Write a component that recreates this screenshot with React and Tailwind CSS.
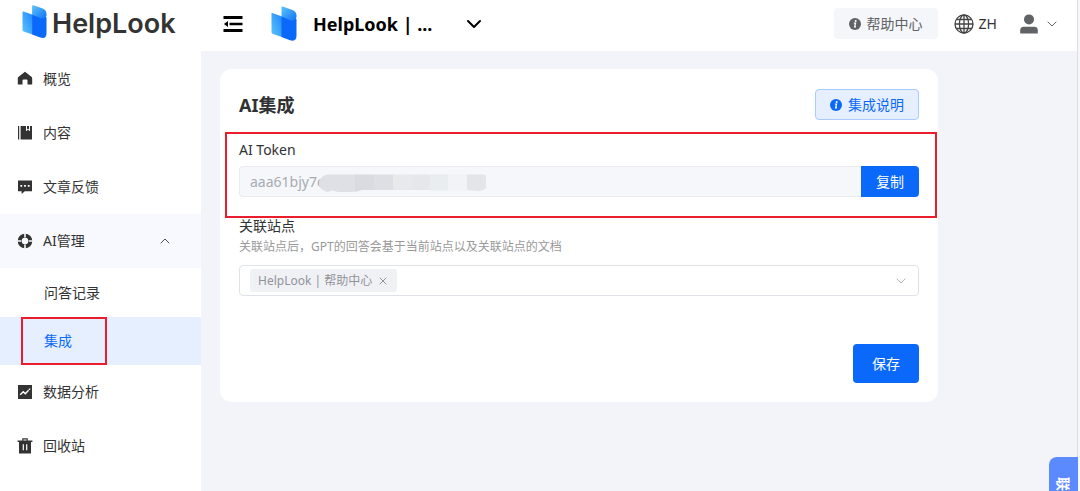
import { ChevronDown, ChevronUp, X } from 'lucide-react'

const HomeIcon = () => (
  <svg viewBox="0 0 16 16" className="h-4 w-4" fill="currentColor" aria-hidden="true">
    <path d="M8 .8 14.4 5.8Q15.2 6.4 15.2 7.4V13.6H10.5V9.6Q10.5 8.4 9.3 8.4H6.7Q5.5 8.4 5.5 9.6V13.6H.8V7.4Q.8 6.4 1.6 5.8Z" />
  </svg>
)

const BookIcon = () => (
  <svg viewBox="0 0 16 16" className="h-4 w-4" aria-hidden="true">
    <path d="M1 1H2.2V14.4H1ZM3.6 1H15V14.4H3.6Z" fill="currentColor" />
    <path d="M9 1H13V6.2L11 4.8 9 6.2Z" fill="#fff" />
    <path d="M10 1H12V4.4L11 3.7 10 4.4Z" fill="currentColor" />
  </svg>
)

const FeedbackIcon = () => (
  <svg viewBox="0 0 16 16" className="h-4 w-4" aria-hidden="true">
    <path d="M1 1.5H15V12.3H7.8L4.6 15V12.3H1Z" fill="currentColor" />
    <path d="M3.4 6H5.2V7.8H3.4ZM7.1 6H8.9V7.8H7.1ZM10.8 6H12.6V7.8H10.8Z" fill="#fff" />
  </svg>
)

const RingIcon = () => (
  <svg viewBox="0 0 16 16" className="h-4 w-4" aria-hidden="true">
    <circle cx="8" cy="8" r="5.2" fill="none" stroke="currentColor" strokeWidth="4.2" />
    <path d="M8 .2V4.4M8 11.6V15.8M.2 8H4.4M11.6 8H15.8" stroke="#f8f9ff" strokeWidth="1.6" />
    <circle cx="8" cy="8" r="3.2" fill="#f8f9ff" />
  </svg>
)

const AnalyticsIcon = () => (
  <svg viewBox="0 0 16 16" className="h-4 w-4" aria-hidden="true">
    <path d="M1 1H15V15H1Z" fill="currentColor" />
    <path d="M3.2 10.8 6.3 7.8 8.3 9.7 11.6 6.2M11.8 5.2H13.2" fill="none" stroke="#fff" strokeWidth="1.4" />
  </svg>
)

const TrashIcon = () => (
  <svg viewBox="0 0 16 16" className="h-4 w-4" aria-hidden="true">
    <path d="M5.8 3V.9H10.2V3" fill="none" stroke="currentColor" strokeWidth="1.2" />
    <path d="M.6 2.6H15.4V4H14V15.4H2V4H.6Z" fill="currentColor" />
    <path d="M6.3 6.2V12.2M9.7 6.2V12.2" stroke="#fff" strokeWidth="1.2" />
  </svg>
)

const InfoIcon = () => (
  <svg viewBox="0 0 12 12" className="h-3 w-3" aria-hidden="true">
    <circle cx="6" cy="6" r="6" fill="currentColor" />
    <circle cx="6.7" cy="3.1" r="1" fill="#fff" />
    <path d="M4.9 5.2H6.5L5.7 8.9H7" fill="none" stroke="#fff" strokeWidth="1.3" />
  </svg>
)

const GlobeIcon = () => (
  <svg viewBox="0 0 20 20" className="h-5 w-5" fill="none" stroke="#444" strokeWidth="1.3" aria-hidden="true">
    <circle cx="10" cy="10" r="9" />
    <ellipse cx="10" cy="10" rx="4.6" ry="9" />
    <path d="M10 1V19M1 10H19M2.6 5.5H17.4M2.6 14.5H17.4" />
  </svg>
)

const UserIcon = () => (
  <svg viewBox="0 0 20 20" className="h-5 w-5" fill="#606266" aria-hidden="true">
    <circle cx="10" cy="5.4" r="5" />
    <path d="M1.2 19.4V16.2Q1.2 12.7 4.7 12.7H15.3Q18.8 12.7 18.8 16.2V19.4Z" />
  </svg>
)

const CollapseIcon = () => (
  <svg viewBox="0 0 20 18" className="h-[18px] w-5" fill="#000" aria-hidden="true">
    <path d="M.5 1H19.5V4H.5ZM6.5 7.8H19.5V10.2H6.5ZM.5 14H19.5V17H.5ZM.9 9 5 5.9V12.1Z" />
  </svg>
)

const LogoMark = ({ id, className }) => (
  <svg viewBox="0 0 26 35" className={className} aria-hidden="true">
    <defs>
      <linearGradient id={`${id}-back`} x1="1" y1="0" x2="0" y2="1">
        <stop offset="0" stopColor="#1f86ff" />
        <stop offset="1" stopColor="#5cc5fb" />
      </linearGradient>
      <linearGradient id={`${id}-top`} x1="0" y1="0" x2="1" y2="1">
        <stop offset="0" stopColor="#5cc5fb" />
        <stop offset="1" stopColor="#1173f5" />
      </linearGradient>
    </defs>
    <path d="M.5 7.6Q.5 6.8 1.4 7.1L11 10.5V31L1.8 28Q.5 27.4.5 26Z" fill={`url(#${id}-back)`} />
    <path d="M10.5 10.3 25.5 13V29.5Q25.5 36.2 19 34.2L10.5 31Z" fill="#0a69fb" />
    <path d="M10.5 1.4Q10.5.2 11.7.6L21.5 4Q25.5 5.8 25.5 9.6V11Q24.5 15.2 19.5 14.2L10.5 10.5Z" fill={`url(#${id}-top)`} />
  </svg>
)

// Blocks painted over the hidden part of the token
const TokenMask = () => (
  <svg viewBox="0 0 170 20" className="pointer-events-none absolute top-[7px] left-[79px] h-5 w-[170px]" aria-hidden="true">
    <path d="M10 1.5H38V18.5L32 19H20L15 17.5 9 19Q0 16 1 9.5 2 3 10 1.5Z" fill="#dfe0e5" />
    <path d="M37 1.5H56V17H44L37 19Z" fill="#dadbe0" />
    <path d="M56 1.5H75V17H56Z" fill="#dedfe4" />
    <path d="M75 1.5H94V17H75Z" fill="#e7e9ec" />
    <path d="M94 1.5H112V17H94Z" fill="#e5e7ea" />
    <path d="M112 1.5H130V17.5H112Z" fill="#e9edef" />
    <path d="M130 1H149V17.5H130Z" fill="#f1f3f6" />
    <path d="M149 1.5H166Q168 1.5 168 4V15Q165 18 160 18L149 17Z" fill="#e4e5e9" />
  </svg>
)

const topItems = [
  { label: '概览', icon: HomeIcon },
  { label: '内容', icon: BookIcon },
  { label: '文章反馈', icon: FeedbackIcon },
]

const bottomItems = [
  { label: '数据分析', icon: AnalyticsIcon },
  { label: '回收站', icon: TrashIcon },
]

const NavItem = ({ label, icon: Icon }) => (
  <a href="#" className="flex h-[54px] items-center gap-[10px] pl-[17px]">
    <Icon />
    {label}
  </a>
)

const Sidebar = () => (
  <aside className="w-[201px] shrink-0 bg-white text-[#333]">
    <a href="#" className="flex h-[52px] items-start gap-[5px] pt-1 pl-[22px]">
      <LogoMark id="brand" className="h-[35px] w-[25px]" />
      <span className="pt-1 font-['Inter',sans-serif] text-[27px] leading-8 font-semibold">HelpLook</span>
    </a>
    <nav>
      {topItems.map((item) => (
        <NavItem key={item.label} {...item} />
      ))}
      <button type="button" className="flex h-[54px] w-full items-center gap-[10px] bg-[#f8f9ff] pr-7 pl-[17px]">
        <RingIcon />
        AI管理
        <ChevronUp className="ml-auto h-4 w-4" strokeWidth={1.3} />
      </button>
      <a href="#" className="flex h-[49px] items-center pl-11">
        问答记录
      </a>
      <a href="#" className="relative flex h-12 items-center bg-[#e6efff] pl-11 text-[#0a69fb]">
        集成
        <span className="absolute inset-y-0 left-[21px] w-[86px] border-2 border-[#ea1d2c]" />
      </a>
      {bottomItems.map((item) => (
        <NavItem key={item.label} {...item} />
      ))}
    </nav>
  </aside>
)

const Header = () => (
  <header className="flex h-[51px] items-center bg-white pr-[17px] pb-1 pl-[22px]">
    <button type="button" aria-label="菜单">
      <CollapseIcon />
    </button>
    <button type="button" className="ml-7 flex items-center">
      <LogoMark id="site" className="h-[35px] w-[26px]" />
      <span className="ml-4 text-lg leading-6 font-bold text-black">HelpLook | ...</span>
      <ChevronDown className="ml-[30px] h-6 w-6 text-black" />
    </button>
    <a href="#" className="ml-auto flex h-[31px] items-center gap-[6px] rounded bg-[#f5f6fa] px-[15px] text-[#606266]">
      <InfoIcon />
      帮助中心
    </a>
    <button type="button" className="ml-4 flex items-center gap-[5px] text-[#333]">
      <GlobeIcon />
      ZH
    </button>
    <button type="button" aria-label="账户" className="ml-[22px] flex items-center gap-[5px] text-[#606266]">
      <UserIcon />
      <ChevronDown className="h-4 w-4" strokeWidth={1.5} />
    </button>
  </header>
)

const IntegrationCard = () => (
  <form className="max-w-[718px] rounded-xl bg-white pt-5 pb-[19px] text-[#303133]">
    <div className="flex h-[31px] items-center justify-between px-[19px]">
      <h1 className="text-lg font-bold">AI集成</h1>
      <a
        href="#"
        className="flex h-[31px] items-center gap-[6px] rounded border border-[#a9caff] bg-[#e6efff] px-[14px] text-[#0a69fb]"
      >
        <InfoIcon />
        集成说明
      </a>
    </div>

    <div className="mt-3 mr-[1px] ml-[5px] border-2 border-[#ea1d2c] pt-[6px] pr-4 pb-[19px] pl-3">
      <label htmlFor="token" className="block leading-5">
        AI Token
      </label>
      <div className="relative mt-[6px] flex h-[31px]">
        <input
          id="token"
          readOnly
          value="aaa61bjy7c"
          className="min-w-0 flex-1 rounded-l border border-r-0 border-[#e9ebf0] bg-[#f5f7fb] px-[10px] text-[#a8abb2] outline-none"
        />
        <TokenMask />
        <button type="button" className="w-[58px] rounded-r bg-[#0a69fb] text-white">
          复制
        </button>
      </div>
    </div>

    <div className="px-[19px]">
      <label htmlFor="sites" className="block leading-4">
        关联站点
      </label>
      <p className="mt-1 text-xs leading-[18px] text-[#999]">关联站点后，GPT的回答会基于当前站点以及关联站点的文档</p>
      <div className="relative mt-[9px] flex h-[31px] items-center rounded border border-[#e0e2e9] pl-[10px]">
        <span className="flex h-[23px] items-center gap-[5px] rounded-[3px] bg-[#f0f1f5] px-2 text-xs text-[#909399]">
          HelpLook | 帮助中心
          <button type="button" aria-label="移除">
            <X className="h-3 w-3" strokeWidth={2} />
          </button>
        </span>
        <select id="sites" defaultValue="" className="h-full min-w-0 flex-1 appearance-none bg-transparent outline-none">
          <option value="" />
        </select>
        <ChevronDown className="pointer-events-none absolute right-[9px] h-4 w-4 text-[#b1b4bb]" strokeWidth={1.5} />
      </div>
      <div className="mt-12 flex justify-end">
        <button type="submit" className="h-[39px] w-[66px] rounded bg-[#0a69fb] text-white">
          保存
        </button>
      </div>
    </div>
  </form>
)

const App = () => {
  return (
    <div className="relative flex h-screen overflow-hidden bg-[#f3f4f9] font-['Noto_Sans','Noto_Sans_CJK_SC',sans-serif] text-sm">
      <Sidebar />
      <div className="min-w-0 flex-1">
        <Header />
        <main className="px-[19px] pt-[18px]">
          <IntegrationCard />
        </main>
      </div>
      <div className="w-[3px] shrink-0 border-l border-[#dcdde2] bg-[#f7f7fa]" />
      <button
        type="button"
        className="absolute right-[2px] bottom-0 flex h-[34px] w-[29px] items-center overflow-hidden rounded-tl-lg bg-[#5b8aff] pt-5 leading-[29px] font-bold text-white [text-orientation:sideways] [writing-mode:vertical-rl]"
      >
        联
      </button>
    </div>
  )
}

export default App
